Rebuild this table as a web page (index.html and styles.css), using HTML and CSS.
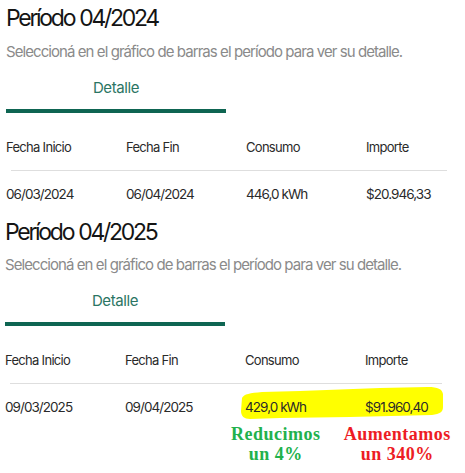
FILE: index.html
```html
<!DOCTYPE html>
<html lang="es">
<head>
<meta charset="utf-8">
<title>Período</title>
<link rel="stylesheet" href="styles.css">
</head>
<body>
<section class="periodo">
  <h2 class="titulo">Período 04/2024</h2>
  <p class="sub">Seleccioná en el gráfico de barras el período para ver su detalle.</p>
  <div class="tabs"><div class="tab">Detalle</div></div>
  <div class="fila cab">
    <span>Fecha Inicio</span><span>Fecha Fin</span><span>Consumo</span><span>Importe</span>
  </div>
  <div class="divisor"></div>
  <div class="fila datos">
    <span>06/03/2024</span><span>06/04/2024</span><span>446,0 kWh</span><span>$20.946,33</span>
  </div>
</section>
<section class="periodo periodo--b">
  <h2 class="titulo">Período 04/2025</h2>
  <p class="sub">Seleccioná en el gráfico de barras el período para ver su detalle.</p>
  <div class="tabs"><div class="tab">Detalle</div></div>
  <div class="fila cab">
    <span>Fecha Inicio</span><span>Fecha Fin</span><span>Consumo</span><span>Importe</span>
  </div>
  <div class="divisor"></div>
  <div class="fila datos">
    <svg class="resaltado" viewBox="241 386 204 33" width="204" height="33" aria-hidden="true">
      <path d="M242 397 C244 393 250 392 262 391 L300 390 L380 387 L428 386 C438 386 442 388 443 393 L443 406 C443 411 440 413 432 414 L350 416 L280 417 L250 418 C244 418 241 415 241 410 Z" fill="#ffff00"/>
    </svg>
    <span>09/03/2025</span><span>09/04/2025</span><span>429,0 kWh</span><span>$91.960,40</span>
  </div>
  <div class="notas">
    <p class="nota nota--verde">Reducimos<br>un 4%</p>
    <p class="nota nota--rojo">Aumentamos<br>un 340%</p>
  </div>
</section>
</body>
</html>
```

FILE: styles.css
```css
* { box-sizing: border-box; }
body {
  margin: 0;
  background: #fff;
  font-family: Inter, "Liberation Sans", sans-serif;
  color: #222;
}
.periodo {
  padding: 2px 0 11px 6px;
}
.periodo--b {
  padding-left: 5px;
}
.titulo {
  margin: 0;
  font-size: 23px;
  line-height: 32px;
  font-weight: 400;
  letter-spacing: -2.3px;
  word-spacing: 1px;
  color: #141414;
}
.sub {
  margin: 7.5px 0 0;
  font-size: 15px;
  line-height: 20px;
  letter-spacing: -0.93px;
  color: #8a8a8a;
}
.tabs {
  margin-top: 16px;
  display: flex;
}
.tab {
  width: 220px;
  text-align: center;
  font-size: 15px;
  line-height: 20px;
  letter-spacing: -0.4px;
  color: #2b7563;
  padding-bottom: 11px;
  border-bottom: 4px solid #0e6552;
}
.fila {
  display: grid;
  grid-template-columns: repeat(4, 120px);
  position: relative;
}
.fila span { position: relative; }
.cab {
  margin-top: 25px;
  font-size: 13px;
  line-height: 18px;
  letter-spacing: -0.7px;
  color: #2a2a2a;
}
.divisor {
  margin: 14px 0 0 5px;
  width: 436px;
  height: 1px;
  background: #dedede;
}
.periodo--b .divisor { width: 432px; }
.datos {
  margin-top: 14px;
  font-size: 13.5px;
  line-height: 18px;
  letter-spacing: -0.95px;
  color: #2a2a2a;
}
.resaltado {
  position: absolute;
  left: 236px;
  top: -11.5px;
}
.notas {
  display: flex;
  padding-left: 222px;
  margin-top: 8px;
}
.nota {
  margin: 0;
  font-family: "Liberation Serif", serif;
  font-weight: 700;
  font-size: 18px;
  line-height: 20px;
  letter-spacing: 0.5px;
  text-align: center;
}
.nota--verde { width: 100px; color: #22b14c; }
.nota--rojo { width: 144px; padding-left: 5px; color: #ed1c24; }
```
